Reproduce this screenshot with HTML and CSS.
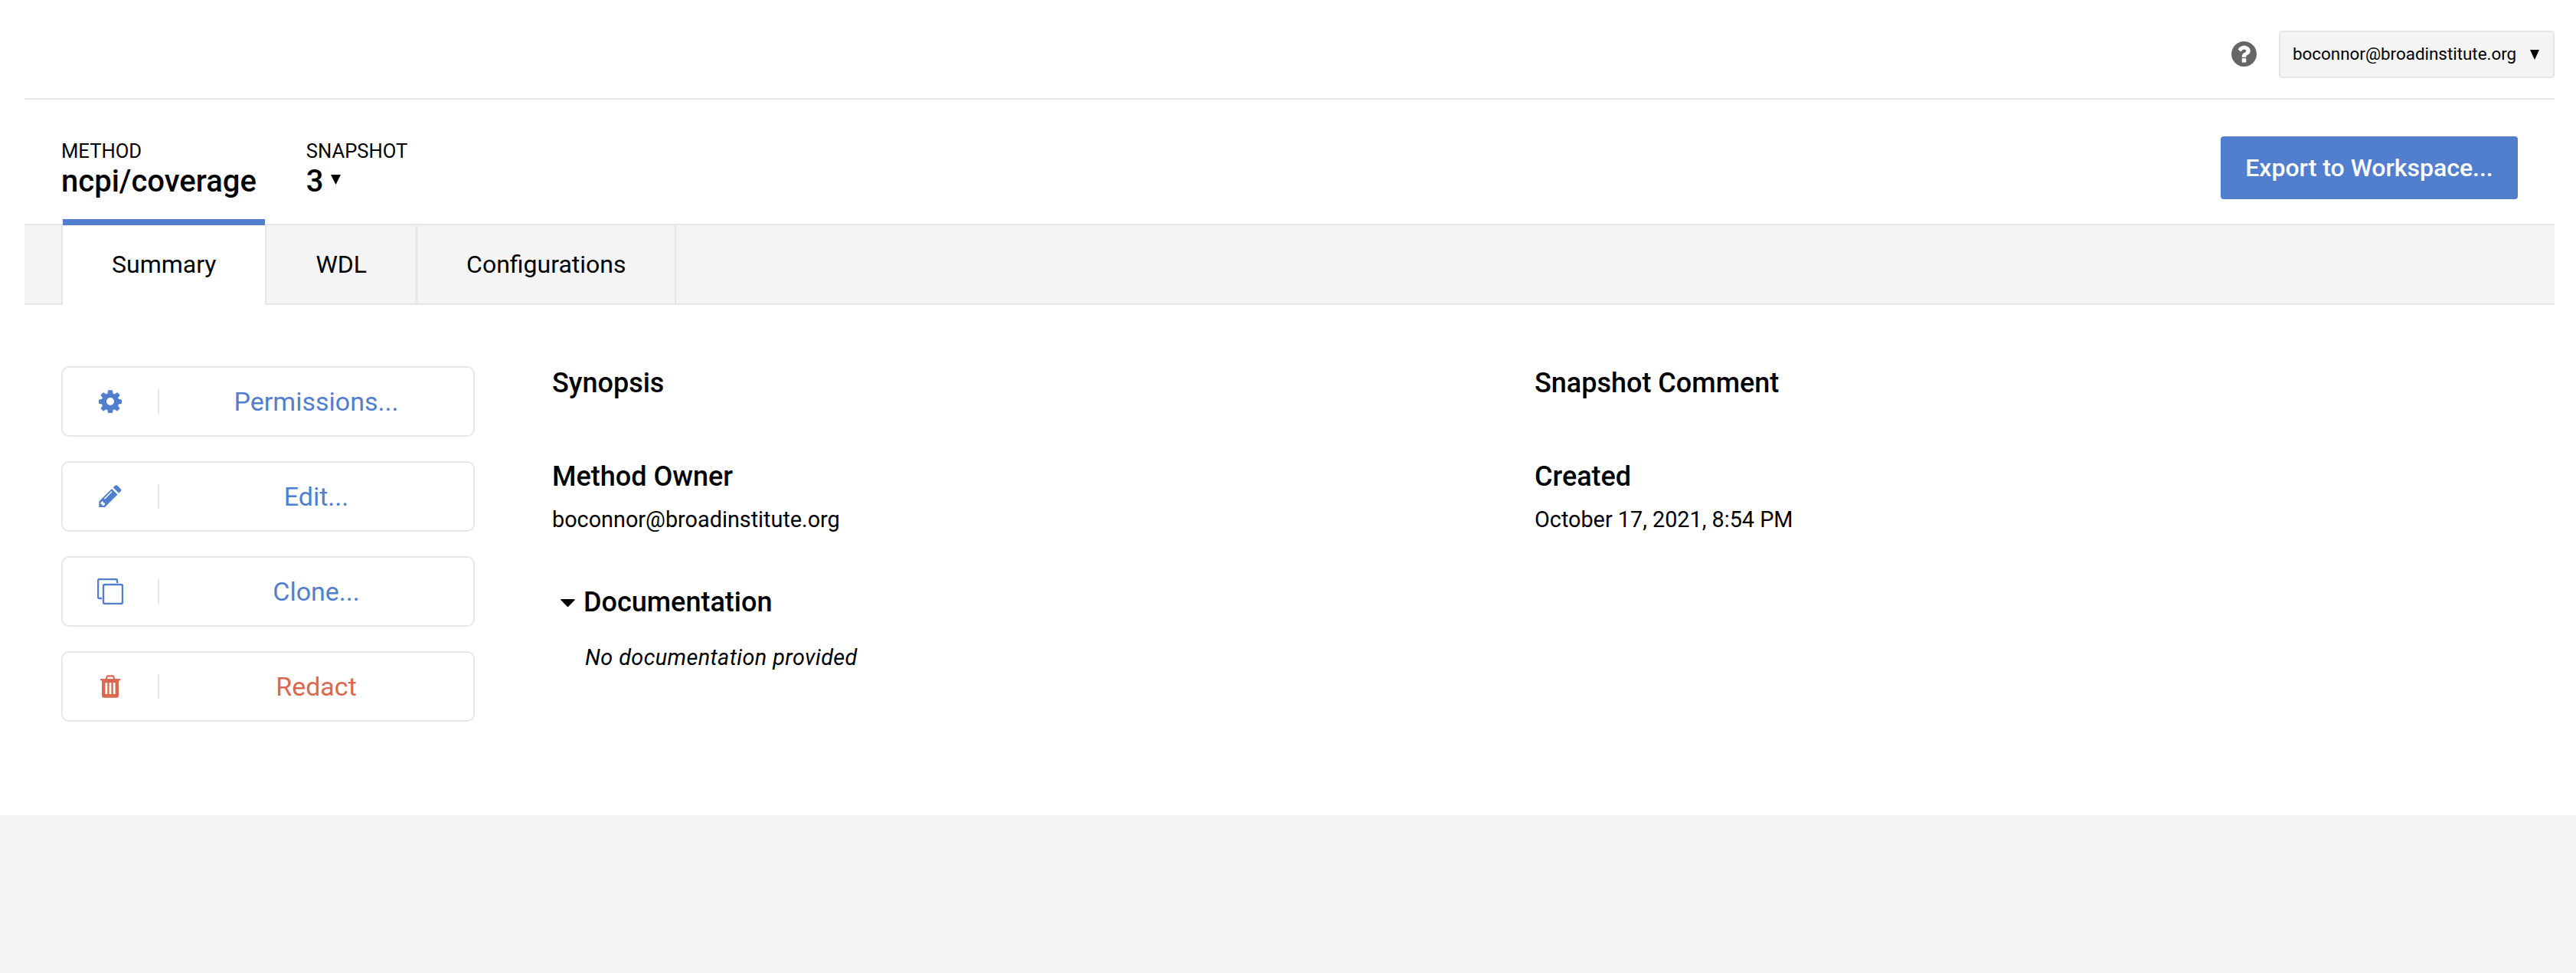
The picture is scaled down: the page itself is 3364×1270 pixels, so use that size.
FILE: index.html
```
<!DOCTYPE html>
<html lang="en">
<head>
<meta charset="utf-8">
<title>ncpi/coverage</title>
<link rel="stylesheet" href="styles.css">
</head>
<body>
<div class="page">
  <header class="topbar">
    <svg class="help" viewBox="0 0 1536 1536"><path d="M896 1248v-192q0-14-9-23t-23-9H672q-14 0-23 9t-9 23v192q0 14 9 23t23 9h192q14 0 23-9t9-23zm256-672q0-88-55.500-163T958 297t-170-41q-243 0-371 213-15 24 8 42l132 100q7 6 19 6 16 0 25-12 53-68 86-92 34-24 86-24 48 0 85.500 26t37.500 59q0 38-20 61t-68 45q-63 28-115.500 86.500T640 892v36q0 14 9 23t23 9h192q14 0 23-9t9-23q0-19 21.500-49.500T972 829q32-18 49-28.500t46-35 44.500-48 28-60.500 12.500-81zm384 192q0 209-103 385.500T1153.500 1433 768 1536t-385.500-103T103 1153.500 0 768t103-385.500T382.500 103 768 0t385.500 103T1433 382.500 1536 768z"/></svg>
    <button class="account"><span>boconnor@broadinstitute.org</span><svg class="account-arrow" viewBox="0 0 12 13"><path d="M0 0h12L6 13z"/></svg></button>
  </header>
  <section class="method-header">
    <div class="field"><span class="label">METHOD</span><span class="value">ncpi/coverage</span></div>
    <div class="field"><span class="label">SNAPSHOT</span><span class="value">3<svg class="snapshot-arrow" viewBox="0 0 13 13"><path d="M0 0h13L6.500 13z"/></svg></span></div>
    <button class="export">Export to Workspace...</button>
  </section>
  <nav class="tabs">
    <a class="tab active">Summary</a>
    <a class="tab">WDL</a>
    <a class="tab">Configurations</a>
  </nav>
  <main class="content">
    <aside class="actions">
      <button class="action"><span class="icon"><svg class="gear" viewBox="0 0 30 30"><path fill-rule="evenodd" d="M12.900.3h4.200q.8 0 .9.800l.5 3.400 2.200.9 2.600-2q.6-.5 1.200 0l2.700 2.700q.5.600 0 1.200l-2 2.600.9 2.200 3.100.4q.8.100.8.900v3.800q0 .8-.8.900l-3.100.5-.9 2.200 2 2.600q.4.600 0 1.200l-2.700 2.700q-.6.500-1.200 0l-2.600-2-2.200.9-.5 3.400q-.1.800-.9.800h-4.200q-.8 0-.9-.8l-.5-3.400-2.200-.9-2.600 2q-.6.500-1.200 0l-2.700-2.700q-.5-.6 0-1.200l2-2.600-.9-2.200-3.100-.5q-.8-.1-.8-.9v-3.800q0-.8.800-.9l3.100-.4.9-2.200-2-2.600q-.5-.6 0-1.200l2.700-2.700q.6-.5 1.200 0l2.600 2 2.200-.9.500-3.400q.1-.8.900-.8zM15 10a5 5 0 1 0 0 10 5 5 0 0 0 0-10z"/></svg></span><span class="caption">Permissions...</span></button>
      <button class="action"><span class="icon"><svg class="pencil" viewBox="0 0 30 30"><path d="M18.700 3.300L21 1q1.800-1.600 3.500 0l4 4q1.700 1.800 0 3.500l-2.300 2.300z"/><path fill-rule="evenodd" d="M17 5l7.500 7.500L8 29H.3v-7.500zM4 21.500l-1.500 1.600V25h2v2h2L8 25.500v-2H6v-2zM16.500 8L6.800 17.700l1 1L17.500 9z"/></svg></span><span class="caption">Edit...</span></button>
      <button class="action"><span class="icon"><svg class="clone" viewBox="0 0 34 34"><path d="M6 26H3q-2 0-2-2V3q0-2 2-2h21q2 0 2 2v3"/><rect x="8" y="8" width="25" height="25" rx="2"/></svg></span><span class="caption">Clone...</span></button>
      <button class="action danger"><span class="icon"><svg class="trash" viewBox="0 0 26 30"><path fill-rule="evenodd" d="M0 5h6.500L8 1.500Q8.500.2 10 .2h6q1.500 0 2 1.300L19.500 5H26v2.200h-2V27q0 2.800-3 2.800H5q-3 0-3-2.800V7.200H0zM9 5h8l-.9-2.600H9.900zM6.500 10v15h2.700V10zm5.100 0v15h2.800V10zm5.200 0v15h2.700V10z"/></svg></span><span class="caption">Redact</span></button>
    </aside>
    <div class="details">
      <div class="column">
        <section class="info"><h2>Synopsis</h2></section>
        <section class="info"><h2>Method Owner</h2><p>boconnor@broadinstitute.org</p></section>
        <section class="docs"><h2><svg class="caret" viewBox="0 0 19 10"><path d="M1 0h17q1.500 0 .5 1.300L10.500 9.500q-1 1-2 0L.5 1.300Q-.5 0 1 0z"/></svg>Documentation</h2><p>No documentation provided</p></section>
      </div>
      <div class="column">
        <section class="info"><h2>Snapshot Comment</h2></section>
        <section class="info"><h2>Created</h2><p>October 17, 2021, 8:54 PM</p></section>
      </div>
    </div>
  </main>
</div>
</body>
</html>
```
FILE: styles.css
```
* { box-sizing: border-box; }
body { margin: 0; min-height: 1270px; background: #f4f4f4; color: #000; font-family: Roboto, sans-serif; font-size: 32px; }
button { font: inherit; color: inherit; margin: 0; padding: 0; border: 0; }
h2, p { margin: 0; }
svg { display: block; flex: none; }

.page { height: 1064px; padding: 0 28px 0 32px; background: #fff; }

.topbar { display: flex; justify-content: flex-end; align-items: center; height: 130px; padding-top: 14px; border-bottom: 2px solid #e6e6e6; }
.help { width: 33px; height: 33px; margin: 0 29px 1px 0; fill: #666; }
.account { display: flex; align-items: center; justify-content: space-between; width: 360px; height: 62px; padding: 0 18px 2px 16px; border: 2px solid #e6e6e6; border-radius: 4px; background: #f4f4f4; font-size: 22.4px; }
.account-arrow { width: 12px; height: 13px; margin-top: 3px; }

.method-header { display: flex; gap: 65px; height: 162px; padding: 48px 48px 0; }
.field { display: flex; flex-direction: column; }
.label { font-size: 25.6px; line-height: 30px; margin-top: 4px; }
.value { display: flex; font-size: 40px; line-height: 49px; font-weight: 500; }
.snapshot-arrow { width: 13px; height: 13px; margin: 16px 0 0 9px; }
.export { width: 388px; height: 82px; margin-left: auto; border-radius: 4px; background: #527fcd; color: #fff; font-weight: 500; }

.tabs { display: flex; height: 106px; padding-left: 50px; background: #f4f4f4; border: solid #e6e6e6; border-width: 2px 0; }
/* hairline between the gutter and the first tab */
.tabs::before { content: ""; width: 2px; margin-left: -2px; background: #e6e6e6; }
.tab { display: flex; align-items: center; padding: 0 64px; border-right: 2px solid #e6e6e6; }
.tab.active { margin: -8px 0 -2px; padding-top: 6px; background: linear-gradient(#527fcd 8px, #fff 8px); border-right: 0; }
.tab.active + .tab { border-left: 2px solid #e6e6e6; }

.content { display: flex; padding: 80px 48px 0; }
.actions { display: flex; flex-direction: column; gap: 32px; width: 540px; }
.action { display: flex; align-items: center; height: 92px; border: 2px solid #e6e6e6; border-radius: 10px; background: #fff; color: #527fcd; font-size: 34px; }
.danger { color: #db6850; }
.icon { display: flex; align-items: center; justify-content: center; width: 126px; height: 32px; border-right: 2px solid #e6e6e6; }
.icon svg { fill: currentColor; }
.caption { flex: 1; text-align: center; }
.gear, .pencil { width: 30px; height: 30px; }
.icon .clone { width: 34px; height: 34px; fill: none; stroke: currentColor; stroke-width: 2.4; }
.trash { width: 26px; height: 30px; }

.details { display: flex; flex: 1; margin: 1px 0 0 101px; }
.column { width: 1283px; }
.info { height: 122px; }
.info + .info { height: 164px; }
h2 { display: flex; align-items: center; font-size: 36px; line-height: 42px; font-weight: 500; }
p { font-size: 28.8px; line-height: 34px; margin-top: 18px; }
.caret { width: 19px; height: 10px; margin: 2px 11px 0; }
.docs p { padding-left: 43px; margin-top: 34px; font-style: italic; letter-spacing: 0.42px; }
```
